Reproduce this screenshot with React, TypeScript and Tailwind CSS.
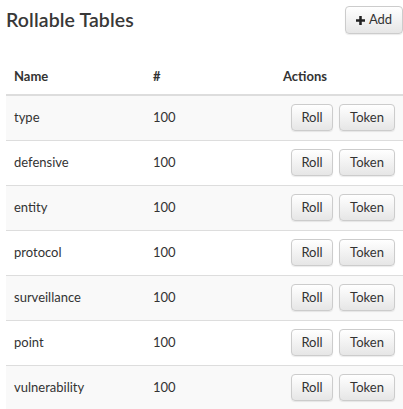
const ROWS = ["type", "defensive", "entity", "protocol", "surveillance", "point", "vulnerability"];

function Btn({ children, w }: { children: React.ReactNode; w: string }) {
  return (
    <button className={`${w} h-[27px] rounded-[4px] border border-[#cccccc] bg-gradient-to-b from-white to-[#e6e6e6] text-[13px] text-[#333] shadow-[0_1px_1px_rgba(0,0,0,0.08)]`}>
      {children}
    </button>
  );
}

export default function App() {
  return (
    <div className="w-[403px] h-[409px] overflow-hidden bg-white pl-[6px] text-[#333] font-['Lato','Noto_Sans',sans-serif]">
      <div className="flex items-center justify-between h-[39px]">
        <h1 className="text-[19.5px] font-semibold text-[#383838] tracking-[0.1px] pt-[1px]">Rollable Tables</h1>
        <button className="w-[58px] h-[28px] mt-[1px] rounded-[4px] border border-[#cccccc] bg-gradient-to-b from-white to-[#e6e6e6] text-[13px] text-[#333] flex items-center justify-center gap-[4px] shadow-[0_1px_1px_rgba(0,0,0,0.08)]">
          <svg width="9" height="9" viewBox="0 0 10 10">
            <path d="M3.6 0h2.8v3.6H10v2.8H6.4V10H3.6V6.4H0V3.6h3.6z" fill="#222" />
          </svg>
          Add
        </button>
      </div>
      <table className="w-[397px] mt-[17px] text-[13px] border-collapse">
        <thead>
          <tr className="border-b-2 border-[#dddddd] h-[39px] text-left">
            <th className="w-[139px] pl-[8px] pt-[3px] font-bold">Name</th>
            <th className="w-[130px] pl-[8px] pt-[3px] font-bold">#</th>
            <th className="pl-[8px] pt-[3px] font-bold">Actions</th>
          </tr>
        </thead>
        <tbody>
          {ROWS.map((r, i) => (
            <tr key={r} className={`h-[45px] border-t border-[#dddddd] ${i % 2 === 0 ? "bg-[#f9f9f9]" : "bg-white"}`}>
              <td className="pl-[8px]">{r}</td>
              <td className="pl-[8px]">100</td>
              <td className="pr-[8px]">
                <div className="flex justify-end gap-[6px]">
                  <Btn w="w-[42px]">Roll</Btn>
                  <Btn w="w-[56px]">Token</Btn>
                </div>
              </td>
            </tr>
          ))}
        </tbody>
      </table>
    </div>
  );
}
